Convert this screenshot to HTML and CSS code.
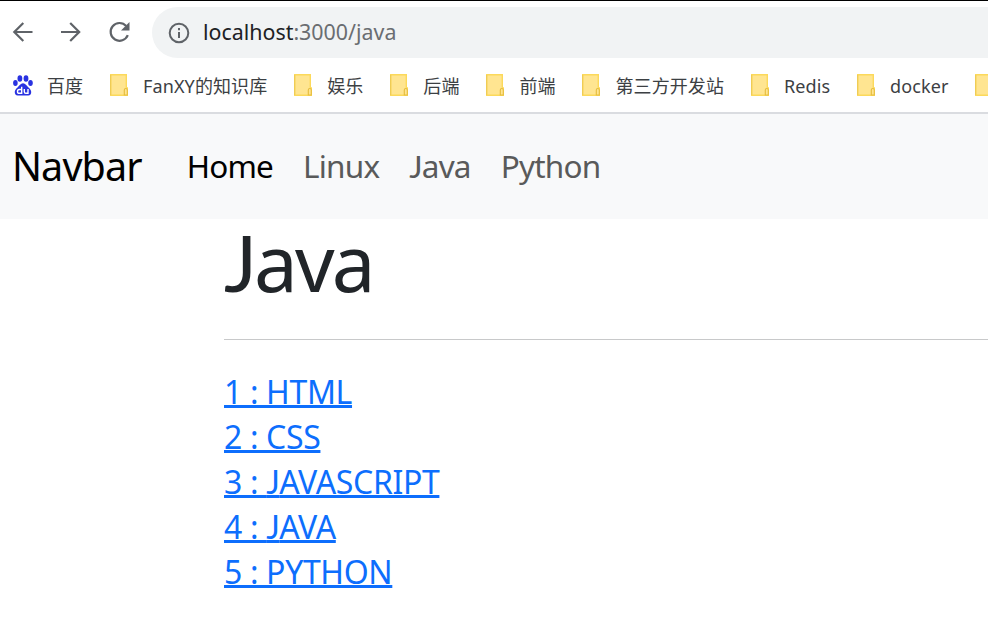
FILE: index.html
```html
<!DOCTYPE html>
<html lang="zh">
<head>
<meta charset="utf-8">
<title>Java</title>
<link rel="stylesheet" href="styles.css">
</head>
<body>
<svg class="defs" width="0" height="0">
  <symbol id="folder" viewBox="0 0 18 22">
    <path d="M.7.7h15.600v13.300h1v7.300H.7z" fill="#ffe591" stroke="#fcd95b" stroke-width="1.4"/>
    <path d="M.6 1v20" stroke="#efcc55" stroke-width="1.2"/>
    <path d="M14.300 21v-5q0-1.500 1.500-1.500t1.500 1.500v5z" fill="#ffe591" stroke="#e5bd3e" stroke-width="1.100"/>
  </symbol>
</svg>
<header class="browser">
  <div class="toolbar">
    <svg class="tool" viewBox="0 0 24 24"><path d="M21.500 12H3.500M12.300 3 3.300 12l9 9"/></svg>
    <svg class="tool" viewBox="0 0 24 24"><path d="M2 12H20M11.200 3l9 9-9 9"/></svg>
    <svg class="tool" viewBox="0 0 24 24"><path d="M20.800 15.200A8.900 8.900 0 1 1 19.200 6"/><path class="solid" d="M22.500 2v8.500H14z"/></svg>
    <div class="address">
      <svg class="info" viewBox="0 0 22 22"><circle cx="11" cy="11" r="9.300"/><path d="M11 10v6M11 6v2.300"/></svg>
      <span class="url"><b>localhost</b>:3000/java</span>
    </div>
  </div>
  <div class="bookmarks">
    <a class="bookmark"><svg class="paw" viewBox="0 0 20 21">
      <g fill="#2932e1"><ellipse cx="6.900" cy="3.500" rx="2.400" ry="3.300"/><ellipse cx="13" cy="3.500" rx="2.400" ry="3.300"/><ellipse cx="2.400" cy="8" rx="2.300" ry="3"/><ellipse cx="17.500" cy="8" rx="2.300" ry="3"/><path d="M10 8.300c2.500 0 3.500 2.300 5.500 4.200 2 1.800 3.200 3.500 2.600 5.700-.7 2.600-3.300 2.500-8.100 2.200-4.800.3-7.400.4-8.100-2.200-.6-2.200.6-3.900 2.600-5.700 2-1.900 3-4.200 5.500-4.200z"/></g>
      <g fill="none" stroke="#fff" stroke-width="1.400"><path d="M8.700 11.800v6.500H6.300q-1.800 0-1.800-1.900t1.800-1.900h2.400M11.300 14v2.700q0 1.600 1.500 1.600h2.200V14"/></g>
    </svg><span>百度</span></a>
    <a class="bookmark"><svg class="folder"><use href="#folder"/></svg><span>FanXY的知识库</span></a>
    <a class="bookmark"><svg class="folder"><use href="#folder"/></svg><span>娱乐</span></a>
    <a class="bookmark"><svg class="folder"><use href="#folder"/></svg><span>后端</span></a>
    <a class="bookmark"><svg class="folder"><use href="#folder"/></svg><span>前端</span></a>
    <a class="bookmark"><svg class="folder"><use href="#folder"/></svg><span>第三方开发站</span></a>
    <a class="bookmark"><svg class="folder"><use href="#folder"/></svg><span>Redis</span></a>
    <a class="bookmark"><svg class="folder"><use href="#folder"/></svg><span>docker</span></a>
    <a class="bookmark"><svg class="folder"><use href="#folder"/></svg></a>
  </div>
</header>
<nav class="navbar">
  <a class="brand">Navbar</a>
  <a class="nav-link active">Home</a>
  <a class="nav-link">Linux</a>
  <a class="nav-link"><span class="j">J</span>ava</a>
  <a class="nav-link">Python</a>
</nav>
<main class="container">
  <h1><span class="j">J</span>ava</h1>
  <hr>
  <ul class="topics">
    <li><a href="#">1 : HTML</a></li>
    <li><a href="#">2 : CSS</a></li>
    <li><a href="#">3 : <span class="j">J</span>AVASCRIPT</a></li>
    <li><a href="#">4 : <span class="j">J</span>AVA</a></li>
    <li><a href="#">5 : PYTHON</a></li>
  </ul>
</main>
</body>
</html>
```
FILE: styles.css
```css
* { box-sizing: border-box; }
body {
  margin: 0;
  height: 623px;
  overflow: hidden;
  background: #fff;
  color: #212529;
  font-family: "Noto Sans", "Noto Sans CJK SC", sans-serif;
}
.defs { display: block; }
.j { font-family: Lato, sans-serif; line-height: 1; }
.browser {
  height: 114px;
  border-top: 1px solid #000;
  border-bottom: 2px solid #dadce0;
}
.toolbar {
  display: flex;
  align-items: center;
  gap: 24px;
  height: 57px;
  padding: 6px 0 0 11px;
}
.tool {
  flex: none;
  width: 24px;
  height: 24px;
  margin-top: -2px;
  fill: none;
  stroke: #5f6368;
  stroke-width: 2.2;
}
.tool .solid { fill: #5f6368; stroke: none; }
.address {
  flex: 1;
  display: flex;
  align-items: center;
  gap: 13px;
  height: 51px;
  margin-left: -3px;
  padding-left: 16px;
  border-radius: 26px 0 0 26px;
  background: #f1f3f4;
}
.info {
  width: 22px;
  height: 22px;
  margin-top: 1px;
  fill: none;
  stroke: #5f6368;
  stroke-width: 2;
}
.url { margin-top: -2px; font-size: 21.4px; line-height: 30px; color: #6a6d71; }
.url b { font-weight: 400; color: #202124; }
.bookmarks {
  display: flex;
  align-items: center;
  gap: 26.9px;
  height: 54px;
  padding-left: 13px;
}
.bookmark {
  flex: none;
  display: flex;
  align-items: center;
  gap: 15px;
  height: 24px;
  font-size: 18px;
  line-height: 24px;
  letter-spacing: .1px;
  color: #3c4043;
  white-space: nowrap;
}
.bookmark span { margin-top: 2px; }
.folder { width: 18px; height: 22px; }
.paw { width: 20px; height: 21px; margin-right: -1px; }
.navbar {
  display: flex;
  align-items: center;
  height: 105px;
  padding: 0 0 2px 12px;
  background: #f8f9fa;
  font-size: 31.5px;
  letter-spacing: -.8px;
}
.brand { margin-right: 45px; font-size: 39.5px; letter-spacing: -.9px; color: #000; }
.nav-link { margin-right: 30px; color: #595a5a; }
.nav-link.active { color: #000; }
.container { padding: 3px 0 0 224px; }
h1 {
  margin: 0 0 37px;
  font-size: 78px;
  font-weight: 400;
  line-height: 80px;
  letter-spacing: -2.9px;
}
hr { margin: 0; border: 0; border-top: 1px solid #c8c9ca; }
.topics { margin: 29px 0 0; padding: 0; list-style: none; }
.topics li { height: 45px; font-size: 32px; line-height: 45px; letter-spacing: -.35px; }
.topics a {
  color: #0d6efd;
  text-decoration: underline 3px;
  text-underline-offset: 1px;
  text-decoration-skip-ink: none;
}
```
